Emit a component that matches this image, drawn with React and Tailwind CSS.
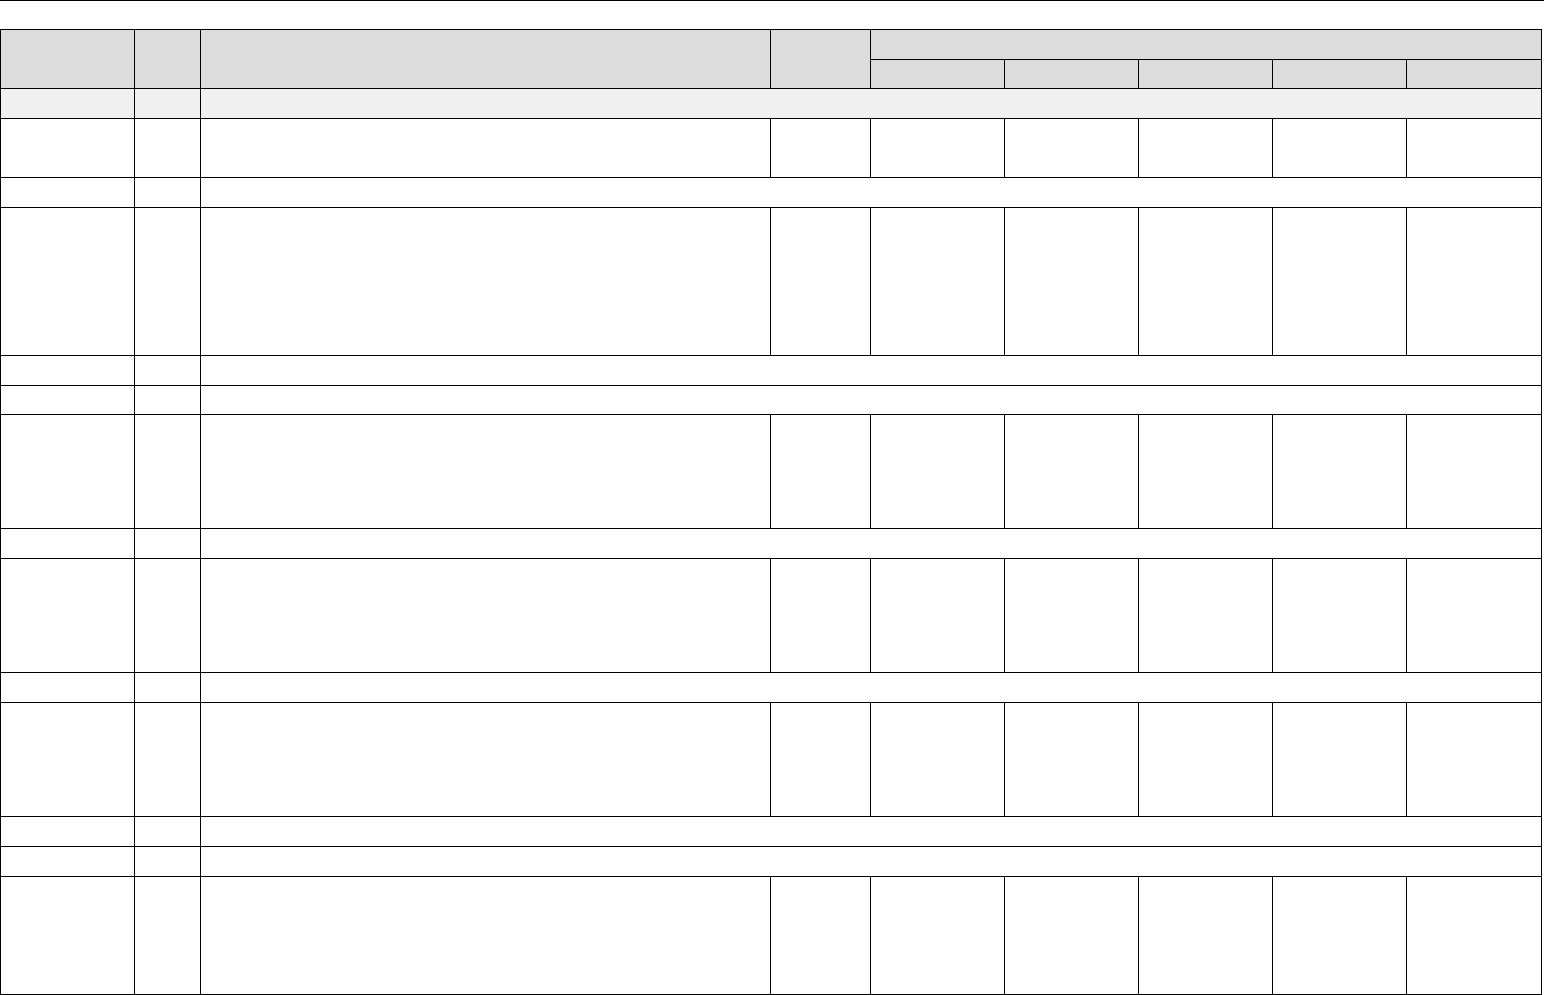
import React from "react";

function Section({ gray }) {
  const bg = gray ? "bg-[#f0f0f0]" : "bg-white";
  return (
    <>
      <div className={bg} />
      <div className={bg} />
      <div className={`${bg} col-span-7`} />
    </>
  );
}

function DataRow() {
  return (
    <>
      {Array.from({ length: 9 }).map((_, i) => (
        <div key={i} className="bg-white" />
      ))}
    </>
  );
}

export default function App() {
  return (
    <div className="w-[1544px] h-[995px] bg-white overflow-hidden font-['Liberation_Sans',sans-serif]">
      <div className="h-px w-full bg-black" />
      <div className="mt-[28px] w-fit grid gap-px bg-black p-px grid-cols-[133px_65px_569px_99px_133px_133px_133px_133px_134px] grid-rows-[29px_28px_29px_58px_29px_147px_29px_28px_113px_29px_113px_29px_113px_29px_29px_117px]">
        <div className="bg-[#dcdcdc] row-span-2" />
        <div className="bg-[#dcdcdc] row-span-2" />
        <div className="bg-[#dcdcdc] row-span-2" />
        <div className="bg-[#dcdcdc] row-span-2" />
        <div className="bg-[#dcdcdc] col-span-5" />
        <div className="bg-[#dcdcdc]" />
        <div className="bg-[#dcdcdc]" />
        <div className="bg-[#dcdcdc]" />
        <div className="bg-[#dcdcdc]" />
        <div className="bg-[#dcdcdc]" />

        <Section gray />
        <DataRow />
        <Section />
        <DataRow />
        <Section />
        <Section />
        <DataRow />
        <Section />
        <DataRow />
        <Section />
        <DataRow />
        <Section />
        <Section />
        <DataRow />
      </div>
    </div>
  );
}
